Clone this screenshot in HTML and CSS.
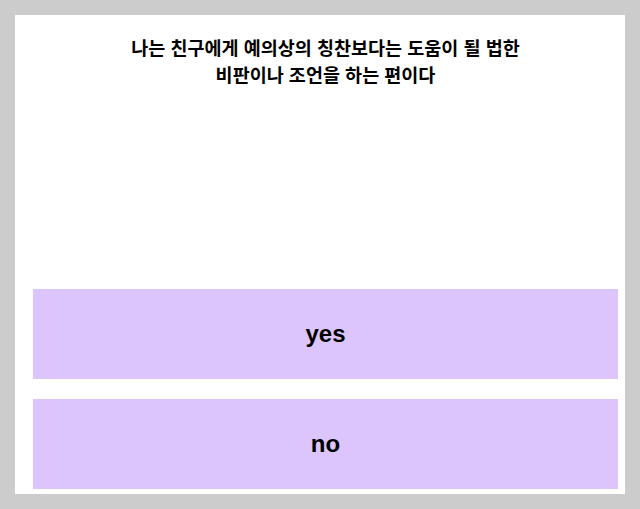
FILE: index.html
```html
<!DOCTYPE html>
<html lang="ko">
<head>
    <meta charset="UTF-8">
    <meta name="viewport" content="width=device-width, initial-scale=1.0">
    <title>질문</title>
    <link rel="stylesheet" href="styles.css">
</head>
<body>
    <div id="card">
        <div class="question">나는 친구에게 예의상의 칭찬보다는 도움이 될 법한<br>비판이나 조언을 하는 편이다</div>
        <div class="answers">
            <button class="answer">yes</button>
            <button class="answer">no</button>
        </div>
    </div>
</body>
</html>
```
FILE: styles.css
```css
body {
    margin: 0;
    padding: 15px;
    background-color: #ccc;
    font-family: 'Liberation Sans', Arial, sans-serif;
}
#card {
    background: #fff;
    height: 479px;
    box-sizing: border-box;
    padding: 19px 7px 5px 18px;
    display: flex;
    flex-direction: column;
}
.question {
    font-family: 'Noto Sans CJK KR', sans-serif;
    font-weight: bold;
    font-size: 18.5px;
    line-height: 27px;
    text-align: center;
    color: #000;
}
.answers {
    margin-top: auto;
    display: flex;
    flex-direction: column;
    gap: 20px;
}
.answer {
    height: 90px;
    border: none;
    padding: 0;
    background-color: #dcc5fd;
    font-family: 'Liberation Sans', Arial, sans-serif;
    font-size: 24px;
    font-weight: bold;
    color: #000;
    cursor: pointer;
}
```
